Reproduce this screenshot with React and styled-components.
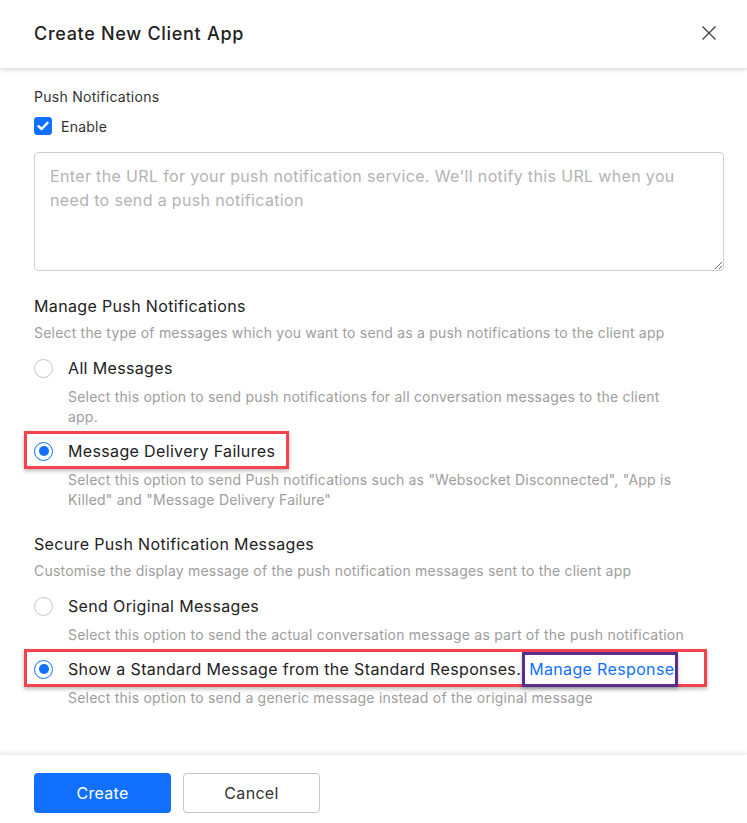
import React, { useState } from "react";
import styled, { createGlobalStyle } from "styled-components";

const GlobalStyle = createGlobalStyle`
  html, body {
    margin: 0;
    padding: 0;
    background: #fff;
  }
  body {
    font-family: Inter, "Noto Sans", "Liberation Sans", sans-serif;
    color: #222;
  }
  * {
    box-sizing: border-box;
  }
`;

function App() {
  const [enabled, setEnabled] = useState(true);
  const [delivery, setDelivery] = useState("failures");
  const [secure, setSecure] = useState("standard");

  return (
    <Modal>
      <GlobalStyle />
      <Header>
        <Title>Create New Client App</Title>
        <CloseBtn aria-label="close">
          <svg width="16" height="16" viewBox="0 0 16 16">
            <path
              d="M1.5 1.5 L14.5 14.5 M14.5 1.5 L1.5 14.5"
              stroke="#444"
              strokeWidth="1.4"
              fill="none"
            />
          </svg>
        </CloseBtn>
      </Header>

      <Body>
        <FieldLabel>Push Notifications</FieldLabel>
        <CheckRow onClick={() => setEnabled(!enabled)}>
          <CheckBox $checked={enabled}>
            {enabled && (
              <svg width="12" height="10" viewBox="0 0 12 10">
                <path
                  d="M1.5 5.2 L4.6 8 L10.5 1.8"
                  stroke="#fff"
                  strokeWidth="2.4"
                  fill="none"
                  strokeLinecap="round"
                  strokeLinejoin="round"
                />
              </svg>
            )}
          </CheckBox>
          <CheckText>Enable</CheckText>
        </CheckRow>
        <UrlInput placeholder="Enter the URL for your push notification service. We'll notify this URL when you need to send a push notification" />

        <SectionTitle>Manage Push Notifications</SectionTitle>
        <SectionHint>
          Select the type of messages which you want to send as a push
          notifications to the client app
        </SectionHint>

        <OptionList>
          <Option>
            <RadioRow onClick={() => setDelivery("all")}>
              <Radio $checked={delivery === "all"} />
              <RadioText>All Messages</RadioText>
            </RadioRow>
            <OptionDesc>
              Select this option to send push notifications for all
              conversation messages to the client app.
            </OptionDesc>
          </Option>
          <Option>
            <RadioRow $boxed onClick={() => setDelivery("failures")}>
              <Radio $checked={delivery === "failures"} />
              <RadioText>Message Delivery Failures</RadioText>
            </RadioRow>
            <OptionDesc>
              Select this option to send Push notifications such as
              "Websocket Disconnected", "App is Killed" and "Message Delivery
              Failure"
            </OptionDesc>
          </Option>
        </OptionList>

        <SectionTitle $top={22}>Secure Push Notification Messages</SectionTitle>
        <SectionHint>
          Customise the display message of the push notification messages sent
          to the client app
        </SectionHint>

        <OptionList>
          <Option>
            <RadioRow onClick={() => setSecure("original")}>
              <Radio $checked={secure === "original"} />
              <RadioText>Send Original Messages</RadioText>
            </RadioRow>
            <OptionDesc>
              Select this option to send the actual conversation message as
              part of the push notification
            </OptionDesc>
          </Option>
          <Option>
            <RadioRow
              $boxed
              $padRight={29}
              onClick={() => setSecure("standard")}
            >
              <Radio $checked={secure === "standard"} />
              <RadioText>
                Show a Standard Message from the Standard Responses.
                <ManageLink href="#">Manage Response</ManageLink>
              </RadioText>
            </RadioRow>
            <OptionDesc>
              Select this option to send a generic message instead of the
              original message
            </OptionDesc>
          </Option>
        </OptionList>
      </Body>

      <Footer>
        <PrimaryButton>Create</PrimaryButton>
        <SecondaryButton>Cancel</SecondaryButton>
      </Footer>
    </Modal>
  );
}

export default App;

const Modal = styled.div`
  width: 747px;
  height: 823px;
  display: flex;
  flex-direction: column;
  background: #fff;
  overflow: hidden;
`;

const Header = styled.header`
  height: 68px;
  flex-shrink: 0;
  display: flex;
  align-items: center;
  justify-content: space-between;
  padding: 0 30px 2px 34px;
  background: #fff;
  box-shadow: 0 2px 4px rgba(0, 0, 0, 0.14);
  position: relative;
  z-index: 1;
`;

const Title = styled.h2`
  margin: 0;
  font-size: 18px;
  font-weight: 500;
  color: #222;
  letter-spacing: 0.7px;
`;

const CloseBtn = styled.button`
  border: none;
  background: none;
  padding: 0;
  width: 16px;
  height: 16px;
  display: flex;
  cursor: pointer;
`;

const Body = styled.main`
  flex: 1;
  display: flex;
  flex-direction: column;
  align-items: flex-start;
  padding: 20px 23px 0 34px;
`;

const FieldLabel = styled.div`
  font-size: 14px;
  line-height: 18px;
  color: #333;
  letter-spacing: 0.28px;
`;

const CheckRow = styled.label`
  display: flex;
  align-items: center;
  gap: 9px;
  margin-top: 11px;
  cursor: pointer;
`;

const CheckBox = styled.span`
  width: 18px;
  height: 18px;
  border-radius: 3px;
  display: flex;
  align-items: center;
  justify-content: center;
  background: ${(p) => (p.$checked ? "#1170ff" : "#fff")};
  border: 1px solid ${(p) => (p.$checked ? "#1170ff" : "#bbb")};
`;

const CheckText = styled.span`
  font-size: 14px;
  color: #333;
  letter-spacing: 0.25px;
`;

const UrlInput = styled.textarea`
  margin-top: 17px;
  width: 690px;
  height: 119px;
  border: 1px solid #cfcfcf;
  border-radius: 4px;
  padding: 11px 15px;
  font-family: Inter, "Noto Sans", "Liberation Sans", sans-serif;
  font-size: 16px;
  line-height: 24px;
  letter-spacing: 0.35px;
  color: #333;
  resize: vertical;
  outline: none;
  &::placeholder {
    color: #b3b3b3;
  }
`;

const SectionTitle = styled.h3`
  margin: ${(p) => p.$top ?? 23}px 0 0;
  font-size: 16px;
  line-height: 24px;
  font-weight: 400;
  color: #222;
  letter-spacing: 0.35px;
`;

const SectionHint = styled.p`
  margin: 6px 0 0;
  font-size: 14px;
  line-height: 18px;
  color: #9d9d9d;
  letter-spacing: 0.2px;
`;

const OptionList = styled.div`
  display: flex;
  flex-direction: column;
  gap: 12px;
  margin-top: 14px;
  width: 100%;
`;

const Option = styled.div`
  display: flex;
  flex-direction: column;
  align-items: flex-start;
  gap: 7px;
`;

const RadioRow = styled.label`
  display: inline-flex;
  align-items: center;
  gap: 15px;
  height: 24px;
  cursor: pointer;
  ${(p) =>
    p.$boxed &&
    `
    height: auto;
    border: 3px solid #f4424f;
    margin: -8px -${p.$padRight ?? 14}px -6px -10px;
    padding: 5px ${(p.$padRight ?? 14) - 3}px 3px 7px;
    box-shadow: 0 2px 4px rgba(0, 0, 0, 0.28);
  `}
`;

const Radio = styled.span`
  width: 19px;
  height: 19px;
  flex-shrink: 0;
  border-radius: 50%;
  background: #fff;
  border: ${(p) => (p.$checked ? "1.5px solid #1170ff" : "1px solid #c6c6c6")};
  display: flex;
  align-items: center;
  justify-content: center;
  &::after {
    content: "";
    width: 10px;
    height: 10px;
    border-radius: 50%;
    background: #1170ff;
    display: ${(p) => (p.$checked ? "block" : "none")};
  }
`;

const RadioText = styled.span`
  font-size: 16px;
  line-height: 24px;
  color: #222;
  white-space: nowrap;
  letter-spacing: 0.35px;
`;

const ManageLink = styled.a`
  display: inline-block;
  color: #1170ff;
  text-decoration: none;
  border: 3px solid #5a2d8c;
  padding: 2px 1px 3px 4px;
  margin: -5px 0 -6px 1px;
  line-height: 24px;
  box-shadow: 0 2px 4px rgba(0, 0, 0, 0.25);
`;

const OptionDesc = styled.p`
  margin: 0 0 0 34px;
  max-width: 622px;
  font-size: 14px;
  line-height: 20px;
  color: #9d9d9d;
  letter-spacing: 0.22px;
`;

const Footer = styled.footer`
  flex-shrink: 0;
  height: 68px;
  display: flex;
  gap: 12px;
  padding: 18px 34px 0;
  background: #fff;
  box-shadow: 0 -2px 4px rgba(0, 0, 0, 0.1);
  position: relative;
`;

const PrimaryButton = styled.button`
  width: 137px;
  height: 40px;
  border: none;
  border-radius: 4px;
  background: #1170ff;
  color: #fff;
  font-family: Inter, "Noto Sans", "Liberation Sans", sans-serif;
  font-size: 16px;
  letter-spacing: 0.3px;
  cursor: pointer;
`;

const SecondaryButton = styled.button`
  width: 137px;
  height: 40px;
  border: 1px solid #c6c6c6;
  border-radius: 4px;
  background: #fff;
  color: #333;
  font-family: Inter, "Noto Sans", "Liberation Sans", sans-serif;
  font-size: 16px;
  letter-spacing: 0.3px;
  cursor: pointer;
`;
